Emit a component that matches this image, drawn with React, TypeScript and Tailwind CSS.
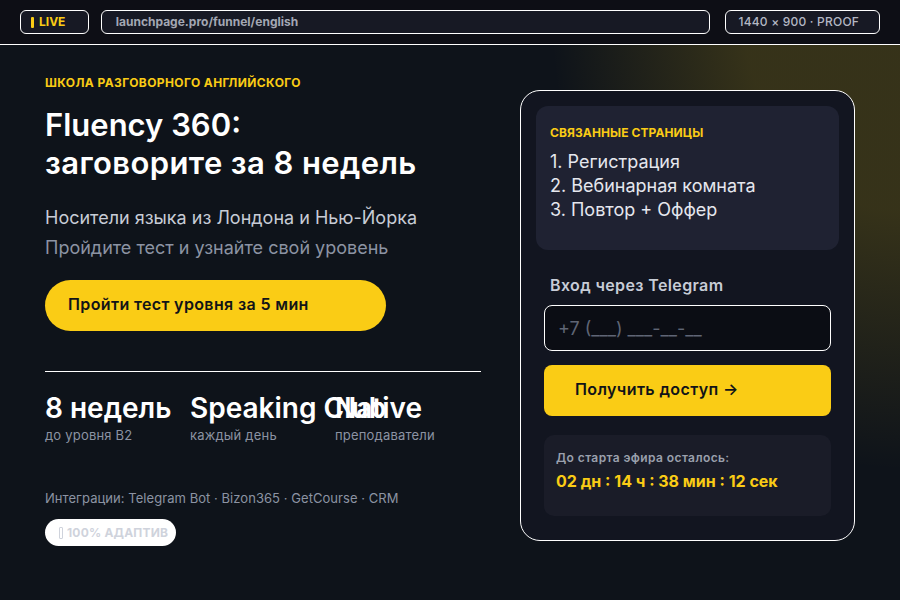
// Fluency 360 — funnel landing proof
const STATS = [
  { value: '8 недель', label: 'до уровня B2' },
  { value: 'Speaking Club', label: 'каждый день' },
  { value: 'Native', label: 'преподаватели' },
];

const PAGES = ['1. Регистрация', '2. Вебинарная комната', '3. Повтор + Оффер'];

export default function App() {
  return (
    <div className="w-[900px] h-[600px] overflow-hidden bg-[#0e131a] font-['Inter','Noto_Sans',sans-serif] text-white flex flex-col relative">
      {/* glow */}
      <div className="absolute inset-0 bg-[radial-gradient(ellipse_350px_470px_at_100%_0%,rgba(250,204,21,0.17)_45%,rgba(250,204,21,0)_100%)] pointer-events-none" />

      {/* top bar */}
      <header className="relative h-[45px] bg-[#0d0e15] border-b border-white flex items-center px-5 shrink-0">
        <div className="w-[69px] h-[24px] rounded-md border border-white bg-[#171924] flex items-center pl-[10px] gap-[5px]">
          <span className="w-[3px] h-[11px] bg-[#facc15] rounded-[1px]" />
          <span className="text-[12px] font-bold text-[#facc15]">LIVE</span>
        </div>
        <div className="ml-3 w-[611px] h-[24px] rounded-md border border-white bg-[#171924] flex items-center pl-[14px]">
          <span className="text-[12px] font-bold text-[#a3a7b3]">launchpage.pro/funnel/english</span>
        </div>
        <div className="ml-[15px] w-[156px] h-[24px] rounded-md border border-white bg-[#171924] flex items-center pl-[13px]">
          <span className="text-[12px] font-medium text-[#b4b8c4] tracking-[0.2px]">1440 × 900 · PROOF</span>
        </div>
      </header>

      <main className="relative flex px-[45px] pt-[29px]">
        {/* left column */}
        <section className="w-[436px] shrink-0">
          <p className="mt-[1px] text-[12px] leading-4 font-bold text-[#facc15] uppercase tracking-[0.4px]">Школа разговорного английского</p>
          <h1 className="mt-[15px] text-[31px] leading-[38px] font-semibold text-white">
            Fluency 360:<br /><span className="tracking-[0.4px]">заговорите за 8 недель</span>
          </h1>
          <p className="mt-[21px] text-[18px] leading-[30px] text-[#c7ccd6]">Носители языка из Лондона и Нью-Йорка</p>
          <p className="text-[18px] leading-[30px] text-[#8c93a3]">Пройдите тест и узнайте свой уровень</p>

          <button className="mt-[17px] w-[341px] h-[51px] rounded-full bg-[#facc15] text-left pl-[23px] pb-[3px] text-[16px] font-semibold text-[#111318] tracking-[0.37px]">
            Пройти тест уровня за 5 мин
          </button>

          <div className="mt-[40px] h-px bg-white" />

          <div className="mt-[20px] grid grid-cols-[145px_145px_145px]">
            {STATS.map(s => (
              <div key={s.value}>
                <div className="text-[28px] leading-8 font-semibold whitespace-nowrap text-white">{s.value}</div>
                <div className="mt-[2px] text-[13px] leading-[18px] text-[#8c93a3] whitespace-nowrap tracking-[0.2px]">{s.label}</div>
              </div>
            ))}
          </div>

          <p className="mt-[45px] text-[13px] leading-[18px] text-[#8c93a3] tracking-[0.05px]">
            Интеграции: Telegram Bot · Bizon365 · GetCourse · CRM
          </p>

          <div className="mt-[12px] w-[131px] h-[27px] rounded-full bg-white flex items-center pl-[14px] gap-[4px]">
            <span className="w-[4px] h-[12px] border border-[#cfd3dc] rounded-[1px]" />
            <span className="text-[12px] font-bold text-[#cfd3dc] whitespace-nowrap tracking-[0.2px]">100% АДАПТИВ</span>
          </div>
        </section>

        {/* right card */}
        <aside className="ml-[39px] mt-[16px] w-[336px] h-[451px] rounded-[20px] border border-white bg-[#121520] p-[15px]">
          <div className="h-[144px] rounded-xl bg-[#1f2232] px-[14px] pt-[19px]">
            <p className="text-[12px] leading-4 font-bold text-[#facc15] uppercase tracking-[0.1px]">Связанные страницы</p>
            <ul className="mt-[9px] text-[18px] leading-6 text-[#e5e7ee]">
              {PAGES.map(p => <li key={p}>{p}</li>)}
            </ul>
          </div>

          <div className="px-2">
            <p className="mt-[23px] pl-[6px] text-[16px] leading-6 font-semibold text-[#c7ccd6] tracking-[0.37px]">Вход через Telegram</p>
            <div className="mt-[8px] h-[46px] rounded-lg border border-white bg-[#0b0d14] flex items-center pl-[13px]">
              <span className="text-[18px] text-[#5f6575]">+7 (___) ___-__-__</span>
            </div>
            <button className="mt-[14px] w-full h-[51px] rounded-lg bg-[#facc15] text-left pl-[31px] pb-[3px] text-[16px] font-semibold text-[#111318] tracking-[0.4px]">
              Получить доступ →
            </button>
            <div className="mt-[19px] h-[81px] rounded-[10px] bg-[#1a1c28] pl-[12px] pt-[15px]">
              <p className="text-[12px] leading-4 font-semibold text-[#9aa0ad] tracking-[0.4px]">До старта эфира осталось:</p>
              <p className="mt-[3px] text-[16px] leading-6 font-bold text-[#facc15]">02 дн : 14 ч : 38 мин : 12 сек</p>
            </div>
          </div>
        </aside>
      </main>
    </div>
  );
}
